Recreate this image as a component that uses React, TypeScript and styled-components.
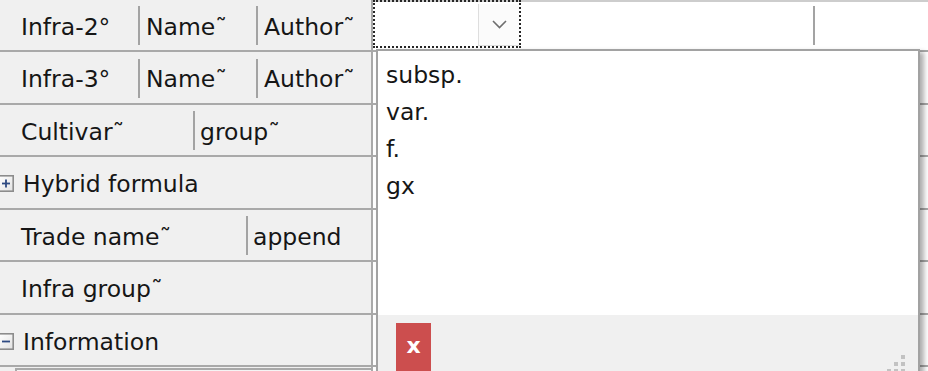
import styled, { createGlobalStyle } from "styled-components";

const GlobalStyle = createGlobalStyle`
  html, body {
    margin: 0;
    padding: 0;
    background: #ffffff;
    overflow: hidden;
  }
  body {
    font-family: "DejaVu Sans", Tahoma, sans-serif;
  }
`;

const Page = styled.div`
  position: relative;
  width: 928px;
  height: 371px;
  overflow: hidden;
  font-size: 23.5px;
  color: #161616;
`;

const Grid = styled.div`
  display: flex;
  flex-direction: column;
  margin-top: -0.5px;
`;

const Row = styled.div`
  display: flex;
  flex: none;
  height: 52.5px;
  box-sizing: border-box;
  border-bottom: 2px solid #a9a9a9;
`;

const LabelCell = styled.div<{ $pad?: number }>`
  width: 373px;
  flex: none;
  box-sizing: border-box;
  display: flex;
  align-items: center;
  padding-left: ${(p) => p.$pad ?? 21}px;
  background: #f0f0f0;
  border-right: 2px solid #a9a9a9;
  white-space: nowrap;
  overflow: hidden;
`;

const Part = styled.span<{ $w?: number; $pad?: number }>`
  flex: ${(p) => (p.$w ? "none" : "1")};
  width: ${(p) => (p.$w ? `${p.$w}px` : "auto")};
  padding-left: ${(p) => p.$pad ?? 0}px;
  padding-top: 4px;
  box-sizing: border-box;
`;

const Divider = styled.span<{ $gap?: number }>`
  flex: none;
  width: 2px;
  height: 39px;
  margin-top: 2px;
  margin-left: ${(p) => p.$gap ?? 0}px;
  background: #a3a3a3;
`;

const ValueCell = styled.div<{ $top?: boolean }>`
  flex: 1;
  display: flex;
  align-items: center;
  background: #ffffff;
  box-shadow: ${(p) => (p.$top ? "inset 0 2px 0 #cdcdcd" : "none")};
`;

const Combo = styled.div`
  align-self: flex-start;
  margin-top: 0.5px;
  width: 148px;
  height: 48px;
  flex: none;
  box-sizing: border-box;
  border: 2px dotted #262626;
  display: flex;
  justify-content: flex-end;
  align-items: flex-start;
`;

const DropButton = styled.div`
  margin-top: 2px;
  width: 41px;
  height: 42px;
  box-sizing: border-box;
  background: #fbfbfb;
  border: 1px solid #dedede;
  border-right: 0;
  border-top: 0;
  display: flex;
  align-items: center;
  justify-content: center;
`;

const Expander = styled.svg`
  flex: none;
  margin-left: -2px;
  margin-right: 9px;
  margin-top: 3px;
`;

const ChildBox = styled.div`
  align-self: stretch;
  margin-left: 15px;
  margin-top: 1px;
  flex: 1;
  background: #f4f4f4;
  border-left: 2px solid #a9a9a9;
  border-top: 2px solid #a9a9a9;
`;

const Popup = styled.div`
  position: absolute;
  left: 376px;
  top: 49px;
  width: 544px;
  height: 328px;
  box-sizing: border-box;
  border: 2px solid #a2a2a2;
  background: #ffffff;
  box-shadow: 4px 3px 5px rgba(0, 0, 0, 0.32);
  display: flex;
  flex-direction: column;
`;

const List = styled.ul`
  list-style: none;
  margin: 0;
  height: 264px;
  flex: none;
  box-sizing: border-box;
  padding: 6px 0 0 8px;
`;

const Item = styled.li`
  height: 37px;
  line-height: 37px;
`;

const Footer = styled.div`
  position: relative;
  flex: 1;
  background: #f0f0f0;
  padding: 8px 0 0 18px;
`;

const CloseButton = styled.button`
  width: 35px;
  height: 48px;
  padding: 0 0 3px;
  border: 0;
  background: #cc4e4e;
  color: #ffffff;
  font-family: "DejaVu Sans", Tahoma, sans-serif;
  font-weight: bold;
  font-size: 22px;
  display: flex;
  align-items: center;
  justify-content: center;
`;

const Grip = styled.svg`
  position: absolute;
  right: 11px;
  bottom: 2px;
`;

function PlusMinus({ open }: { open: boolean }) {
  const id = open ? "gm" : "gp";
  return (
    <Expander width="16" height="17" viewBox="0 0 16 17">
      <defs>
        <linearGradient id={id} x1="0" y1="0" x2="1" y2="1">
          <stop offset="0" stopColor="#ffffff" />
          <stop offset="1" stopColor="#e2e2e2" />
        </linearGradient>
      </defs>
      <rect
        x="0.8"
        y="0.8"
        width="14.4"
        height="15.4"
        fill={`url(#${id})`}
        stroke="#8c8c8c"
        strokeWidth="1.6"
      />
      <path d="M4 8.5H12" stroke="#2e4a82" strokeWidth="1.8" />
      {!open && <path d="M8 4.5V12.5" stroke="#2e4a82" strokeWidth="1.8" />}
    </Expander>
  );
}

const options = ["subsp.", "var.", "f.", "gx"];

const gripDots = [
  [16, 4],
  [9, 11],
  [16, 11],
  [2, 18],
  [9, 18],
  [16, 18],
];

export default function App() {
  return (
    <>
      <GlobalStyle />
      <Page>
        <Grid>
          <Row>
            <LabelCell>
              <Part $w={117}>Infra-2°</Part>
              <Divider />
              <Part $w={116} $pad={6}>Name˜</Part>
              <Divider />
              <Part $pad={6}>Author˜</Part>
            </LabelCell>
            <ValueCell $top>
              <Combo>
                <DropButton>
                  <svg width="15" height="9" viewBox="0 0 15 9">
                    <polyline
                      points="1,1 7.5,7.5 14,1"
                      fill="none"
                      stroke="#6e6e6e"
                      strokeWidth="1.6"
                    />
                  </svg>
                </DropButton>
              </Combo>
              <Divider $gap={292} />
            </ValueCell>
          </Row>
          <Row>
            <LabelCell>
              <Part $w={117}>Infra-3°</Part>
              <Divider />
              <Part $w={116} $pad={6}>Name˜</Part>
              <Divider />
              <Part $pad={6}>Author˜</Part>
            </LabelCell>
            <ValueCell />
          </Row>
          <Row>
            <LabelCell>
              <Part $w={172}>Cultivar˜</Part>
              <Divider />
              <Part $pad={5}>group˜</Part>
            </LabelCell>
            <ValueCell />
          </Row>
          <Row>
            <LabelCell $pad={0}>
              <PlusMinus open={false} />
              <Part>Hybrid formula</Part>
            </LabelCell>
            <ValueCell />
          </Row>
          <Row>
            <LabelCell>
              <Part $w={225}>Trade name˜</Part>
              <Divider />
              <Part $pad={5}>append</Part>
            </LabelCell>
            <ValueCell />
          </Row>
          <Row>
            <LabelCell>
              <Part>Infra group˜</Part>
            </LabelCell>
            <ValueCell />
          </Row>
          <Row>
            <LabelCell $pad={0}>
              <PlusMinus open />
              <Part>Information</Part>
            </LabelCell>
            <ValueCell />
          </Row>
          <Row>
            <LabelCell $pad={0}>
              <ChildBox />
            </LabelCell>
            <ValueCell />
          </Row>
        </Grid>

        <Popup>
          <List>
            {options.map((o) => (
              <Item key={o}>{o}</Item>
            ))}
          </List>
          <Footer>
            <CloseButton>x</CloseButton>
            <Grip width="20" height="20" viewBox="0 0 20 20">
              {gripDots.map(([cx, cy]) => (
                <rect
                  key={`${cx}-${cy}`}
                  x={cx - 2}
                  y={cy - 2}
                  width="4"
                  height="4"
                  fill="#c2c2c2"
                />
              ))}
            </Grip>
          </Footer>
        </Popup>
      </Page>
    </>
  );
}
